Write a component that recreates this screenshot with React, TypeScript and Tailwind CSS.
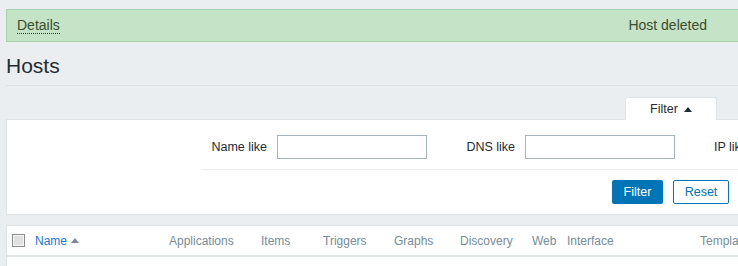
export default function App() {
  return (
    <div className="w-[738px] h-[266px] overflow-hidden bg-[#ebeef0] font-['Liberation_Sans',Arial,sans-serif] text-[#1f2c33]">
      <div className="w-[800px] pl-[6px] pt-[9px]">
        {/* Success message */}
        <div className="h-[33px] flex items-center justify-between pl-[10px] pr-[92px] bg-[#c5e3c6] border border-[#a4d3a7] text-[14px] text-[#3b4d2f]">
          <span className="inline-block leading-[16px] border-b border-dotted border-[#2f3d26]">Details</span>
          <span>Host deleted</span>
        </div>

        {/* Page title */}
        <div className="pt-[12px] pb-[7px] border-b border-[#dde3e7]">
          <h1 className="text-[21px] leading-[24px]">Hosts</h1>
        </div>

        {/* Filter tab */}
        <div className="pt-[11px]">
          <div className="relative z-10 -mb-px ml-[619px] w-[92px] h-[23px] flex items-center justify-center gap-[6px] bg-white border-x border-t border-[#dfe4e7] rounded-t-[3px] text-[12.5px]">
            <span>Filter</span>
            <svg width="8" height="5" viewBox="0 0 8 5">
              <path d="M0 5 L4 0 L8 5 Z" fill="#1f2c33" />
            </svg>
          </div>
        </div>

        {/* Filter panel */}
        <div className="bg-white border border-[#dfe4e7] text-[12.5px]">
          <div className="ml-[194px] pt-[15px] pb-[10px] border-b border-[#ebeef0] flex items-center whitespace-nowrap">
            <label className="shrink-0 w-[66px] text-right">Name like</label>
            <input className="shrink-0 ml-[10px] w-[150px] h-[24px] border border-[#a6b4bc] bg-white outline-none" />
            <label className="shrink-0 w-[88px] text-right">DNS like</label>
            <input className="shrink-0 ml-[10px] w-[150px] h-[24px] border border-[#a6b4bc] bg-white outline-none" />
            <label className="shrink-0 ml-[39px]">IP like</label>
            <input className="shrink-0 ml-[10px] w-[150px] h-[24px] border border-[#a6b4bc] bg-white outline-none" />
          </div>
          <div className="pt-[10px] pb-[10px] pl-[605px] flex gap-[10px]">
            <button className="shrink-0 w-[51px] h-[24px] bg-[#0275b8] text-white rounded-[2px]">Filter</button>
            <button className="shrink-0 w-[56px] h-[24px] bg-white border border-[#0275b8] text-[#0275b8] rounded-[2px]">Reset</button>
          </div>
        </div>

        {/* Hosts table */}
        <div className="mt-[10px] bg-white border-x border-t border-[#dfe4e7]">
          <div className="h-[31px] flex items-center pl-[5px] border-b-2 border-[#dfe4e7] text-[12px] text-[#768d99] whitespace-nowrap">
            <span className="shrink-0 w-[13px] h-[13px] border border-[#8c8c8c] bg-[#e1e1e1] shadow-[inset_0_0_0_1px_#f5f5f5]" />
            <span className="shrink-0 ml-[10px] w-[134px] flex items-center gap-[4px] text-[#1a78d2]">
              Name
              <svg width="8" height="5" viewBox="0 0 8 5">
                <path d="M0 5 L4 0 L8 5 Z" fill="#768d99" />
              </svg>
            </span>
            <span className="shrink-0 w-[92px]">Applications</span>
            <span className="shrink-0 w-[62px]">Items</span>
            <span className="shrink-0 w-[71px]">Triggers</span>
            <span className="shrink-0 w-[66px]">Graphs</span>
            <span className="shrink-0 w-[72px]">Discovery</span>
            <span className="shrink-0 w-[35px]">Web</span>
            <span className="shrink-0 w-[133px]">Interface</span>
            <span className="shrink-0">Templates</span>
          </div>
          <div className="h-[20px]" />
        </div>
      </div>
    </div>
  )
}
